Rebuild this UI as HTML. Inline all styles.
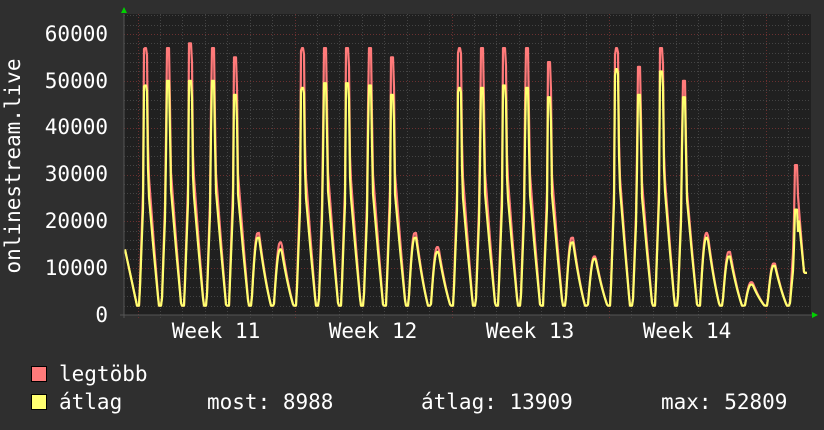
<!DOCTYPE html>
<html><head><meta charset="utf-8"><style>
html,body{margin:0;padding:0;background:#2f2f2f;width:824px;height:430px;overflow:hidden}
svg{display:block}
text{font-family:"DejaVu Sans Mono","Liberation Mono",monospace;font-size:21px;fill:#fff}
</style></head><body>
<svg id="g" width="824" height="430" xmlns="http://www.w3.org/2000/svg">
<rect x="0" y="0" width="824" height="430" fill="#2f2f2f"/>
<rect x="124" y="14" width="687" height="301" fill="#202020"/>
<g id="grid"></g>
<path id="red" fill="none" stroke="#ff7a7a" stroke-width="2.2" stroke-linejoin="round"/>
<path id="yel" fill="none" stroke="#ffff70" stroke-width="2.2" stroke-linejoin="round"/>
<line x1="120" y1="315" x2="814" y2="315" stroke="#555" stroke-width="1"/>
<line x1="124" y1="14" x2="124" y2="318" stroke="#555" stroke-width="1"/>
<polygon points="121,13 127,13 124,7" fill="#00d000"/>
<polygon points="812,312 812,318 818,315" fill="#00d000"/>
<g text-anchor="end">
<text x="108" y="41">60000</text>
<text x="108" y="88">50000</text>
<text x="108" y="134">40000</text>
<text x="108" y="181">30000</text>
<text x="108" y="228">20000</text>
<text x="108" y="275">10000</text>
<text x="108" y="322">0</text>
</g>
<text transform="translate(20,166) rotate(-90)" text-anchor="middle">onlinestream.live</text>
<g text-anchor="middle">
<text x="216" y="338">Week 11</text>
<text x="373" y="338">Week 12</text>
<text x="530" y="338">Week 13</text>
<text x="687" y="338">Week 14</text>
</g>
<rect x="31.5" y="366.5" width="15" height="15" fill="#ff7a7a" stroke="#000"/>
<rect x="31.5" y="394.5" width="15" height="15" fill="#ffff70" stroke="#000"/>
<text x="59" y="381">legtöbb</text>
<text x="59" y="409">átlag</text>
<text x="207" y="409">most: 8988</text>
<text x="421" y="409">átlag: 13909</text>
<text x="661" y="409">max: 52809</text>
</svg>
<script>
(function(){
var ns="http://www.w3.org/2000/svg",grid=document.getElementById('grid');
function Y(v){return 315-v*281/60000;}
function ln(x1,y1,x2,y2,c,d){var l=document.createElementNS(ns,'line');l.setAttribute('x1',x1);l.setAttribute('y1',y1);l.setAttribute('x2',x2);l.setAttribute('y2',y2);l.setAttribute('stroke',c);l.setAttribute('stroke-width',1);l.setAttribute('stroke-dasharray',d);grid.appendChild(l);}
for(var v=2000;v<=64000;v+=2000){var y=Math.round(Y(v))+0.5;if(y<14)break;ln(124,y,811,y,v%10000==0?'#6a3030':'#444','1,2');}
for(var k=-1;k<32;k++){var x=137.5+22.43*k;if(x<125||x>810)continue;x=Math.round(x)+0.5;var wk=((k%7)+7)%7==0;ln(x,14,x,318,wk?'#6a3030':'#444','1,2');}
var R=[57000,57000,58000,57000,55000,17500,15500,57000,57000,57000,57000,55000,17500,14500,57000,57000,57000,57000,54000,16500,12500,57000,53000,57000,50000,17500,13500,7000,11000,32000];
var A=[49000,50000,50000,50000,47000,16500,14000,48500,49500,49500,49000,47000,16500,13500,48500,48500,49000,48500,46500,15500,12000,52500,47000,52000,46500,16500,12500,6500,10500,22500];
function L(a,b,t,t0,t1){return a+(b-a)*(t-t0)/(t1-t0);}
function big(P,t){
 if(t<0.08) return 2000;
 if(t<0.26) return L(2000,0.5*P,t,0.08,0.26);
 if(t<0.29) return L(0.5*P,P,t,0.26,0.29);
 if(t<0.42) return P;
 if(t<0.48) return L(P,0.55*P,t,0.42,0.48);
 if(t<0.72) return L(0.55*P,0.28*P,t,0.48,0.72);
 if(t<0.95) return L(0.28*P,2000,t,0.72,0.95);
 return 2000;
}
function small(P,t){
 if(t<0.08) return 2000;
 if(t<0.35) return 2000+(P-2000)*Math.sin((t-0.08)/0.27*Math.PI/2);
 if(t<0.42) return P;
 if(t<0.95){var u=(t-0.42)/0.53;return 2000+(P-2000)*(1-u)*(1-0.3*u);}
 return 2000;
}
function prof(P,t){return P<20000?small(P,t):big(P,t);}
function build(arr,isR){var d='';for(var x=125;x<=807;x++){var t=(x-137.5)/22.43;var k=Math.floor(t);var f=t-k;var v;
 if(k<0){v=14000-(x-125)/12*12000;if(v<2000)v=2000;}
 else if(k==29){v=prof(arr[29],f);if(f>0.45){v=(isR?25000:22000)-(f-0.45)*(isR?60000:48000);if(v<9000)v=9000;}}
 else v=prof(arr[k],f);
 d+=(x==125?'M':'L')+x+','+Y(v).toFixed(1);}return d;}
document.getElementById('red').setAttribute('d',build(R,true));
document.getElementById('yel').setAttribute('d',build(A,false));
})();
</script>
</body></html>
